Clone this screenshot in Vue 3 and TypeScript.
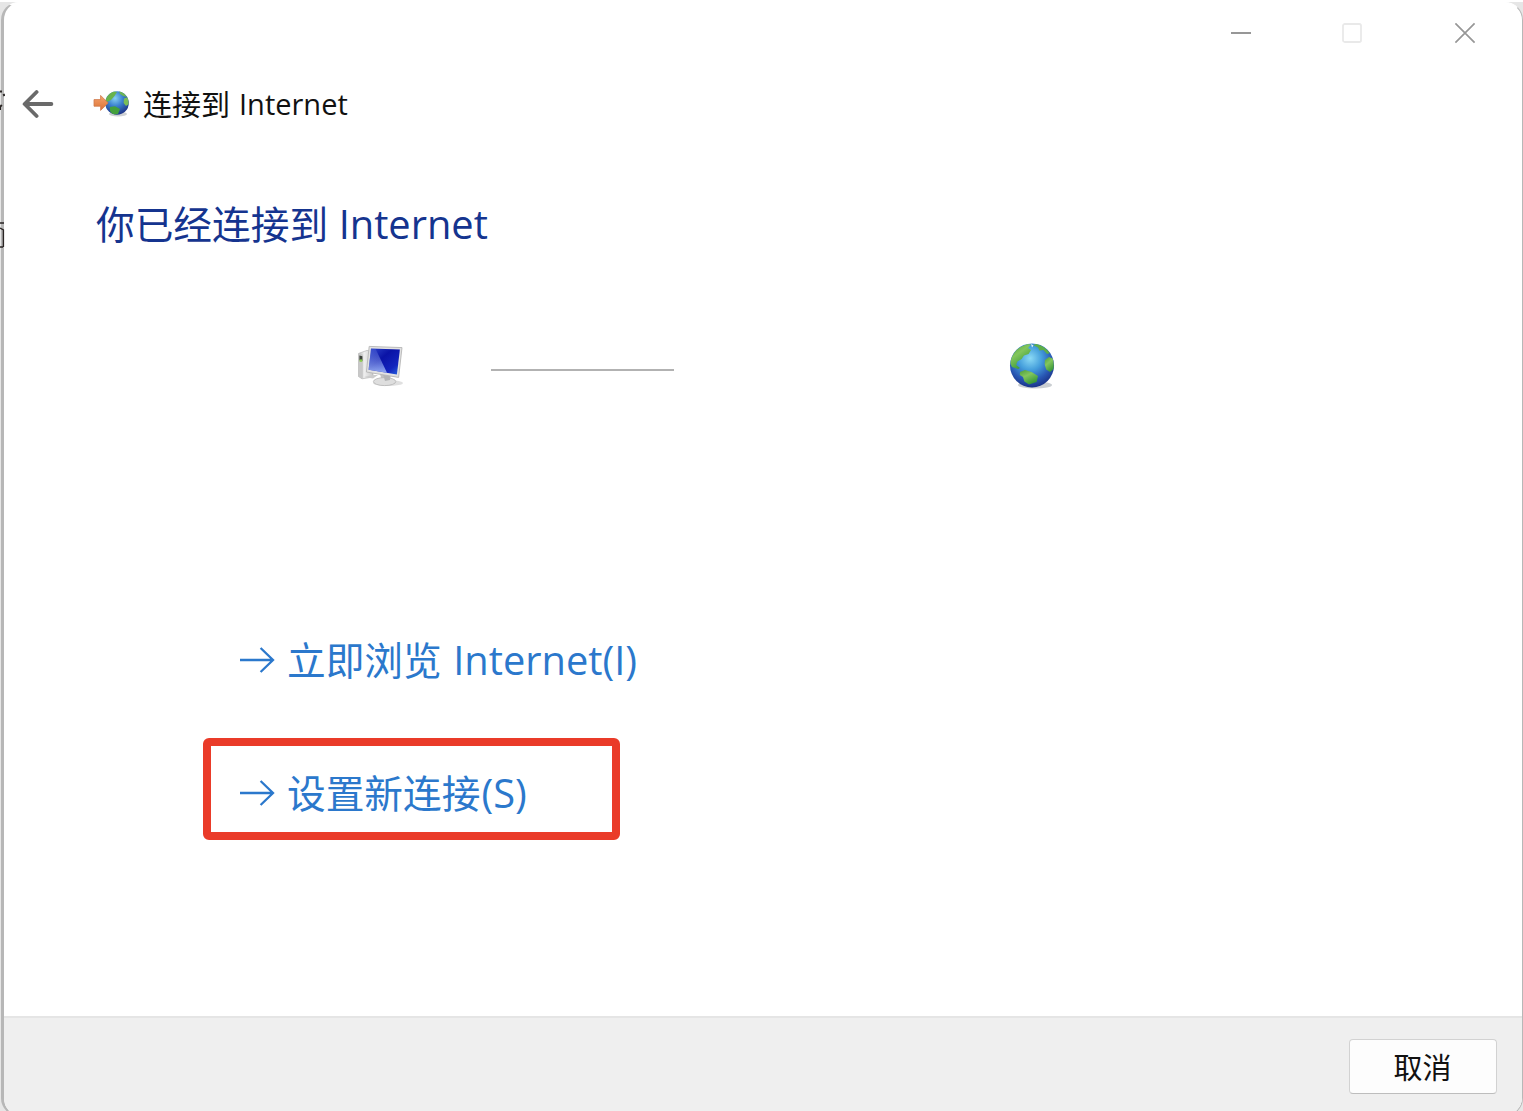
<script setup lang="ts">
interface LinkItem {
  id: string
  cjk: string
  latin: string
  marked: boolean
}

const links: LinkItem[] = [
  { id: 'browse', cjk: '立即浏览', latin: 'Internet(I)', marked: false },
  { id: 'setup', cjk: '设置新连接', latin: '(S)', marked: true },
]
</script>

<template>
  <div class="desktop">
    <div class="window">
      <header class="titlebar">
        <svg class="caption" width="22" height="22" viewBox="0 0 22 22"><path d="M1 11H21" stroke="#979797" stroke-width="1.8" /></svg>
        <svg class="caption" width="22" height="22" viewBox="0 0 22 22"><rect x="2" y="2" width="18" height="18" rx="1.8" fill="none" stroke="#e9e9e9" stroke-width="1.8" /></svg>
        <svg class="caption" width="22" height="22" viewBox="0 0 22 22"><path d="M1.4 1.4 20.6 20.6M20.6 1.4 1.4 20.6" stroke="#979797" stroke-width="1.7" /></svg>
      </header>

      <div class="navrow">
        <svg class="back" width="32" height="30" viewBox="0 0 32 30" fill="none" stroke="#6a6a6a" stroke-width="3.8" stroke-linecap="round" stroke-linejoin="round">
          <path d="M29.4 15H3M14.6 3 2.6 15 14.6 27" />
        </svg>
        <svg class="appicon" width="37" height="30" viewBox="0 0 37 30">
          <defs>
            <radialGradient id="sea-small" cx=".42" cy=".3" r=".72">
              <stop offset="0" stop-color="#86d0f3" />
              <stop offset=".45" stop-color="#3c83d0" />
              <stop offset="1" stop-color="#1c3285" />
            </radialGradient>
            <linearGradient id="orange" x1="0" y1="0" x2="0" y2="1">
              <stop offset="0" stop-color="#f6a46c" />
              <stop offset="1" stop-color="#db7135" />
            </linearGradient>
            <clipPath id="disc-small"><circle cx="24" cy="14" r="11.7" /></clipPath>
          </defs>
          <ellipse cx="25" cy="25" rx="9" ry="2.4" fill="#b9bcc0" opacity=".7" />
          <circle cx="24" cy="14" r="11.8" fill="url(#sea-small)" />
          <g clip-path="url(#disc-small)">
            <path d="M12 12 14 6 20 1.8 24 3 21.5 7 18 11 14 13Z" fill="#68b34c" />
            <path d="M26 2 32 4 34 8 30 7 27 5Z" fill="#6db455" />
            <path d="M31 9.5 35 8 36 15 33 17 30.6 14Z" fill="#79bd57" />
            <path d="M17 18 22 17.3 27 20 25 25 20 26 17 22Z" fill="#43a03c" />
          </g>
          <path d="M1 10.6H7.6V6.4L15.2 14 7.6 21.4V17.2H1Z" fill="url(#orange)" stroke="#ce794b" stroke-width=".8" />
        </svg>
        <div class="apptitle"><span class="cjk">连接到</span><span class="latin">Internet</span></div>
      </div>

      <h1 class="heading"><span class="cjk">你已经连接到</span><span class="latin">Internet</span></h1>

      <div class="diagram">
        <svg class="computer" width="50" height="46" viewBox="0 0 50 46">
          <defs>
            <linearGradient id="screen" x1="0" y1="0" x2="1" y2="1">
              <stop offset="0" stop-color="#3048cc" />
              <stop offset=".4" stop-color="#0a13a6" />
              <stop offset=".75" stop-color="#1324bd" />
              <stop offset="1" stop-color="#2868e2" />
            </linearGradient>
            <linearGradient id="glare" x1="0" y1="0" x2="0" y2="1">
              <stop offset="0" stop-color="#7f95ef" stop-opacity=".15" />
              <stop offset="1" stop-color="#b1cbff" stop-opacity=".8" />
            </linearGradient>
            <linearGradient id="tower" x1="0" x2="1">
              <stop offset="0" stop-color="#bcbcbc" />
              <stop offset=".4" stop-color="#eeeeee" />
              <stop offset="1" stop-color="#c9c9c9" />
            </linearGradient>
          </defs>
          <ellipse cx="33" cy="40" rx="15" ry="3" fill="#d8d8d8" opacity=".8" />
          <path d="M3.6 10.4 12 7.4 18 8.6V34L7 35.8 3.6 33.6Z" fill="url(#tower)" stroke="#aaa" stroke-width=".6" />
          <path d="M3.6 10.4 7.8 11.6V35.4L3.6 33.6Z" fill="#c8c8c8" />
          <path d="M4.4 12.4 7.4 13.2V18L4.4 17.2Z" fill="#3d423b" />
          <path d="M4.6 16.4H7.3V18.8H4.6Z" fill="#8ccc4e" />
          <path d="M18 32 9 34 18 35.5 23 32" fill="#ccc" />
          <path d="M25 31H36L35 38H27Z" fill="#c2c2c2" />
          <ellipse cx="29.6" cy="38.6" rx="11.2" ry="4" fill="#dedede" stroke="#b5b5b5" stroke-width=".8" />
          <path d="M28 31H34.5L35 37 30 38Z" fill="#b4b5b6" />
          <path d="M14.2 3.4 47 4.6 43.6 34.4 11.4 29Z" fill="#e2e2e2" stroke="#b5b5b5" stroke-width=".9" />
          <path d="M16 5.4 44.9 6.6 41.9 31.4 13.6 26.8Z" fill="url(#screen)" />
          <path d="M16 5.4 20.4 5.6 32 29.8 13.6 26.8Z" fill="url(#glare)" />
        </svg>
        <div class="wire"></div>
        <svg class="globe" width="50" height="50" viewBox="0 0 50 50">
          <defs>
            <radialGradient id="sea" cx=".46" cy=".34" r=".66">
              <stop offset="0" stop-color="#8bdaf5" />
              <stop offset=".4" stop-color="#459fdc" />
              <stop offset=".75" stop-color="#2857b4" />
              <stop offset="1" stop-color="#1a3389" />
            </radialGradient>
            <linearGradient id="land" x1="0" y1="0" x2=".6" y2="1">
              <stop offset="0" stop-color="#4c9d3c" />
              <stop offset=".45" stop-color="#83c65d" />
              <stop offset="1" stop-color="#329434" />
            </linearGradient>
            <clipPath id="disc"><circle cx="25" cy="24.4" r="21.8" /></clipPath>
          </defs>
          <ellipse cx="28" cy="44" rx="17" ry="3.6" fill="#aeb3ba" opacity=".65" />
          <circle cx="25" cy="24.4" r="22" fill="url(#sea)" />
          <g clip-path="url(#disc)">
            <path d="M3 22 5 13 11 7 20 3 24 3.4 21 7 24 9 21.6 13 17 14.4 14.6 18 10.4 20.4 9.2 24 13 27 11 28 5 26Z" fill="url(#land)" />
            <path d="M26 4 31 2.6 38 6.4 43 12 40 13 36.4 9 32.4 9.6 31 6.6Z" fill="#5cae49" />
            <path d="M38 19 42 16 47 18 48 27 43 31 39.2 28.4 37.6 23Z" fill="url(#land)" />
            <path d="M13 31 18 29 24.6 31 31 35 29.6 41 22 43.6 17.4 40.4 16 36 12.8 34Z" fill="url(#land)" />
            <path d="M24 3 26.4 4.4 25 6.4Z" fill="#e4f3f5" />
          </g>
        </svg>
      </div>

      <nav class="links">
        <div v-for="item in links" :key="item.id" class="link" :class="{ marked: item.marked }">
          <svg class="arrow" width="36" height="28" viewBox="0 0 36 28" fill="none" stroke="#2b78cc" stroke-width="2.3">
            <path d="M1 14H34M21.6 2 34 14 21.6 26" />
          </svg>
          <span class="cjk">{{ item.cjk }}</span><span class="latin">{{ item.latin }}</span>
        </div>
      </nav>

      <footer class="footer">
        <button class="cancel" type="button">取消</button>
      </footer>
    </div>

    <svg class="edge" width="5" height="160" viewBox="0 0 5 160" fill="none" stroke="#292423">
      <path d="M0 1.6H2M3.5 4 4.5 6M0 20V16.8L1.8 15" stroke-width="2" />
      <path d="M0 133H4M0 138 3.4 140V157M0 157H3" stroke-width="1.4" />
    </svg>
  </div>
</template>

<style>
body {
  margin: 0;
  overflow: hidden;
}
</style>

<style scoped>
.desktop {
  position: relative;
  box-sizing: border-box;
  width: 1523px;
  height: 1111px;
  padding: 2px 0 0 1px;
  overflow: hidden;
  background: linear-gradient(#fff 2px, #e6e6e6 2px);
  font-family: 'Open Sans', 'Noto Sans CJK SC', sans-serif;
}
.window {
  box-sizing: border-box;
  display: flex;
  flex-direction: column;
  width: 1522px;
  height: 1114px;
  overflow: hidden;
  border: 1px solid #b7b7b7;
  border-left-width: 3px;
  border-top-color: #fff;
  border-radius: 18px;
  background: #fff;
}
.titlebar {
  display: flex;
  justify-content: flex-end;
  gap: 90px;
  height: 70px;
  padding: 19px 46px 0 0;
  box-sizing: border-box;
}
.caption { flex: none; }
.caption:first-child { margin-right: -1px; }
.caption:last-child { margin-left: 1px; }
.navrow {
  display: flex;
  align-items: center;
  height: 60px;
  padding-left: 18px;
}
.back { margin-top: 2px; }
.appicon { margin: 1px 0 0 39px; }
.apptitle {
  display: flex;
  align-items: center;
  margin: 1px 0 0 13px;
  line-height: 40px;
  color: #111;
}
.cjk {
  margin-top: -4px;
  font-family: 'Noto Sans CJK SC', sans-serif;
  white-space: pre;
}
.latin { font-family: 'Open Sans', sans-serif; }
.apptitle .cjk { margin-top: -2px; font-size: 29px; }
.apptitle .latin { margin-left: 9px; font-size: 29px; }
.heading {
  display: flex;
  align-items: center;
  height: 60px;
  margin: 61px 0 0 92px;
  font-weight: 400;
  color: #15348f;
}
.heading .cjk { font-size: 38.7px; }
.heading .latin { margin: -2px 0 0 10.5px; font-size: 39.8px; }
.diagram {
  display: flex;
  align-items: center;
  height: 60px;
  margin: 82px 0 0 351px;
}
.wire { width: 183px; height: 2px; margin: 8px 0 0 86px; background: #b2b2b2; }
.globe { margin-left: 333px; }
.links {
  display: flex;
  flex-direction: column;
  gap: 27px;
  margin: 213px 0 0 199px;
}
.link {
  box-sizing: border-box;
  display: flex;
  align-items: center;
  width: 417px;
  height: 102px;
  padding-left: 28px;
  border: 8px solid transparent;
  border-radius: 6px;
  color: #2b78cc;
}
.link.marked { padding-top: 7px; border-color: #ea3b29; }
.arrow { flex: none; margin-right: 12px; }
.link .cjk { font-size: 38.7px; }
.link .latin { font-size: 39.8px; }
.link:not(.marked) .latin { margin: -1px 0 0 11.5px; }
.link.marked .latin { margin: -1px 0 0 1px; }
.footer {
  flex: 1;
  box-sizing: border-box;
  display: flex;
  justify-content: flex-end;
  align-items: flex-start;
  margin-top: 176px;
  padding: 21px 25px 0 0;
  border-top: 2px solid #e5e5e5;
  background: #efefef;
}
.cancel {
  box-sizing: border-box;
  width: 148px;
  height: 55px;
  padding: 0 1px 1px 0;
  border: 1px solid #d2d2d2;
  border-bottom-color: #bdbdbd;
  border-radius: 4px;
  background: #fdfdfd;
  font: 29px/52px 'Noto Sans CJK SC', sans-serif;
  color: #111;
}
.edge { position: absolute; left: 0; top: 90px; }
</style>
